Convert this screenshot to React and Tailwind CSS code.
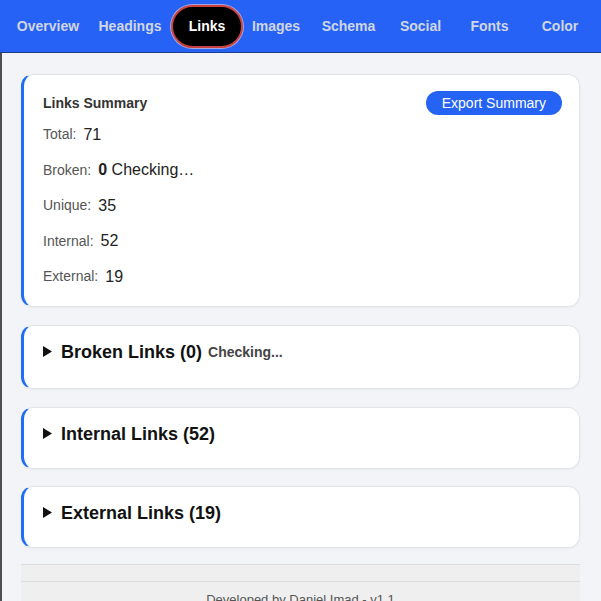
import React from "react";

const tabs = [
  { name: "Overview", w: "w-[82px]" },
  { name: "Headings", w: "w-[82px]" },
  { name: "Links", w: "w-[72px]", active: true },
  { name: "Images", w: "w-[66px]" },
  { name: "Schema", w: "w-[79px]" },
  { name: "Social", w: "w-[65px]" },
  { name: "Fonts", w: "w-[73px]" },
  { name: "Color", w: "w-[68px]" },
];

const summary = [
  { label: "Total:", value: "71" },
  { label: "Broken:", value: "0", extra: "Checking…" },
  { label: "Unique:", value: "35" },
  { label: "Internal:", value: "52" },
  { label: "External:", value: "19" },
];

function Triangle() {
  return (
    <svg width="9" height="11" viewBox="0 0 9 11" className="shrink-0">
      <polygon points="0,0 9,5.5 0,11" fill="#111" />
    </svg>
  );
}

function Section({ title, count, checking, pb }) {
  return (
    <div
      className={`bg-white rounded-xl border border-[#e2e4e8] border-l-[3px] border-l-[#1f6ff5] pl-[19px] pt-[15px] ${pb} shadow-[0_1px_3px_rgba(0,0,0,0.04)]`}
    >
      <div className="flex items-center gap-[9px] h-[22px]">
        <Triangle />
        <span className="text-[18px] font-bold text-[#111] leading-[22px]">
          {title} ({count})
        </span>
        {checking && (
          <span className="text-[14px] font-bold text-[#444] -ml-[3px] mt-[2px]">
            Checking...
          </span>
        )}
      </div>
    </div>
  );
}

export default function App() {
  return (
    <div className="w-[601px] h-[601px] overflow-hidden bg-[#f3f4f7] font-['Liberation_Sans',Arial,sans-serif]">
      {/* Tab bar */}
      <div className="h-[53px] bg-[#2762f6] border-b border-[#1c3c8c] flex items-center pl-[7px]">
        {tabs.map((t) => (
          <div key={t.name} className={`${t.w} flex justify-center shrink-0`}>
            {t.active ? (
              <span className="h-[43px] px-[16px] flex items-center rounded-full bg-black border-2 border-[#c9423f] text-white text-[14px] font-bold shadow-[0_0_0_1px_rgba(255,210,210,0.6)]">
                {t.name}
              </span>
            ) : (
              <span className="text-[14px] font-bold text-[#cfd6e6]">{t.name}</span>
            )}
          </div>
        ))}
      </div>

      {/* Content */}
      <div className="border-l-2 border-[#4d4f55] pl-[19px] pr-[21px] pt-[21px] h-[548px]">
        <div className="bg-white rounded-xl border border-[#e2e4e8] border-l-[3px] border-l-[#1f6ff5] pl-[19px] pr-[17px] pt-[16px] pb-[11px] shadow-[0_1px_3px_rgba(0,0,0,0.04)]">
          <div className="h-[24px] flex items-center justify-between">
            <span className="text-[14px] font-bold text-[#333]">Links Summary</span>
            <button className="h-[24px] px-[16px] rounded-full bg-[#2563f4] text-white text-[14px]">
              Export Summary
            </button>
          </div>
          <div className="mt-[2px]">
            {summary.map((r) => (
              <div key={r.label} className="h-[35.5px] flex items-center gap-[7px]">
                <span className="text-[14px] text-[#555]">{r.label}</span>
                <span className="text-[16px] text-[#222]">
                  {r.extra ? (
                    <>
                      <b>{r.value}</b> {r.extra}
                    </>
                  ) : (
                    r.value
                  )}
                </span>
              </div>
            ))}
          </div>
        </div>

        <div className="mt-[18px]">
          <Section title="Broken Links" count="0" checking pb="pb-[25px]" />
        </div>
        <div className="mt-[18px]">
          <Section title="Internal Links" count="52" pb="pb-[23px]" />
        </div>
        <div className="mt-[17px]">
          <Section title="External Links" count="19" pb="pb-[23px]" />
        </div>

        {/* Footer */}
        <div className="mt-[16px] border-t border-[#dcdcdc] bg-[#efefef]">
          <div className="h-[16px]" />
          <div className="border-t border-[#dcdcdc] pt-[8px] pb-[10px] text-center text-[13px] text-[#555]">
            Developed by Daniel Imad - v1.1
          </div>
        </div>
      </div>
    </div>
  );
}
